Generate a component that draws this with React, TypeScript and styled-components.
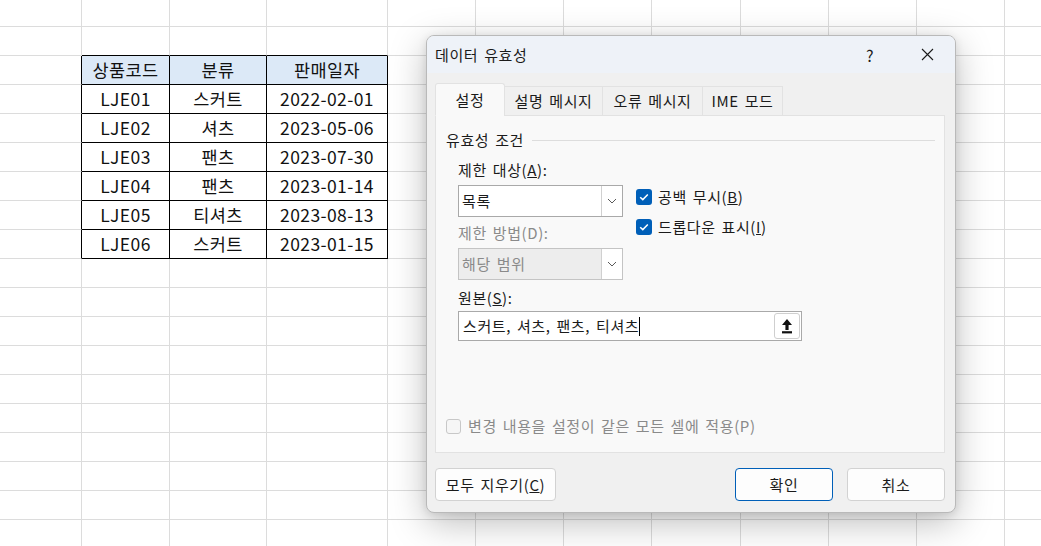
import styled, { createGlobalStyle } from 'styled-components';

const FONT = `"Noto Sans CJK KR", "Noto Sans", sans-serif`;

const GlobalStyle = createGlobalStyle`
  html, body {
    margin: 0;
    padding: 0;
    width: 100%;
    height: 100%;
    overflow: hidden;
    background: #ffffff;
  }
  body {
    font-family: ${FONT};
    color: #1b1b1b;
  }
  * {
    box-sizing: border-box;
  }
`;

// sheet geometry (px) and the little table that sits in B3:D9
const COLUMNS = [82, 88, 97, 121, 88, 88, 88, 89, 88, 88, 88, 88];
const ROW_COUNT = 20;
const HEAD = ['상품코드', '분류', '판매일자'];
const DATA = [
  ['LJE01', '스커트', '2022-02-01'],
  ['LJE02', '셔츠', '2023-05-06'],
  ['LJE03', '팬츠', '2023-07-30'],
  ['LJE04', '팬츠', '2023-01-14'],
  ['LJE05', '티셔츠', '2023-08-13'],
  ['LJE06', '스커트', '2023-01-15'],
];
const TOP = 2;
const LEFT = 1;

const inTable = (r: number, c: number) =>
  r >= TOP && r <= TOP + DATA.length && c >= LEFT && c < LEFT + HEAD.length;

const cellText = (r: number, c: number) => {
  if (!inTable(r, c)) return '';
  if (r === TOP) return HEAD[c - LEFT];
  return DATA[r - TOP - 1][c - LEFT];
};

const App = () => {
  const cells = [];
  for (let r = 0; r < ROW_COUNT; r++) {
    for (let c = 0; c < COLUMNS.length; c++) {
      cells.push(
        <Cell
          key={`${r}-${c}`}
          $right={inTable(r, c) || inTable(r, c + 1)}
          $bottom={inTable(r, c) || inTable(r + 1, c)}
          $head={r === TOP && inTable(r, c)}
        >
          {cellText(r, c)}
        </Cell>
      );
    }
  }

  return (
    <>
      <GlobalStyle />
      <Screen>
        <Sheet>{cells}</Sheet>

        <Dialog>
          <TitleBar>
            <Title>데이터 유효성</Title>
            <TitleButtons>
              <TitleButton>?</TitleButton>
              <TitleButton>
                <svg width="13" height="13" viewBox="0 0 13 13">
                  <path d="M1 1 L12 12 M12 1 L1 12" stroke="#1b1b1b" strokeWidth="1.1" fill="none" />
                </svg>
              </TitleButton>
            </TitleButtons>
          </TitleBar>

          <Body>
            <Tabs>
              <Tab $active $w={70}>설정</Tab>
              <Tab $w={99}>설명 메시지</Tab>
              <Tab $w={101}>오류 메시지</Tab>
              <Tab $w={81}>IME 모드</Tab>
            </Tabs>

            <Panel>
              <GroupHeader>
                <span>유효성 조건</span>
                <GroupLine />
              </GroupHeader>

              <Fields>
                <FieldRow>
                  <LeftCol>
                    <Label>
                      제한 대상(<u>A</u>):
                    </Label>
                    <Combo>
                      <ComboText>목록</ComboText>
                      <ComboArrow>
                        <Chevron />
                      </ComboArrow>
                    </Combo>
                    <Label $disabled $gap={6}>
                      제한 방법(D):
                    </Label>
                    <Combo $disabled>
                      <ComboText>해당 범위</ComboText>
                      <ComboArrow>
                        <Chevron />
                      </ComboArrow>
                    </Combo>
                  </LeftCol>

                  <CheckCol>
                    <CheckRow>
                      <CheckBox>
                        <Tick />
                      </CheckBox>
                      <span>
                        공백 무시(<u>B</u>)
                      </span>
                    </CheckRow>
                    <CheckRow>
                      <CheckBox>
                        <Tick />
                      </CheckBox>
                      <span>
                        드롭다운 표시(<u>I</u>)
                      </span>
                    </CheckRow>
                  </CheckCol>
                </FieldRow>

                <Label $gap={8}>
                  원본(<u>S</u>):
                </Label>
                <SourceInput>
                  <SourceText>
                    스커트, 셔츠, 팬츠, 티셔츠
                    <Caret />
                  </SourceText>
                  <PickButton>
                    <svg width="12" height="16" viewBox="0 0 12 16">
                      <path d="M6 1 L11 7 L7.6 7 L7.6 12 L4.4 12 L4.4 7 L1 7 Z" fill="#111" />
                      <rect x="1" y="13.2" width="10" height="2.2" fill="#111" />
                    </svg>
                  </PickButton>
                </SourceInput>
              </Fields>

              <ApplyRow>
                <EmptyBox />
                <span>변경 내용을 설정이 같은 모든 셀에 적용(P)</span>
              </ApplyRow>
            </Panel>

            <Footer>
              <Button $w={121}>
                모두 지우기(<u>C</u>)
              </Button>
              <ButtonGroup>
                <Button $w={98} $primary>
                  확인
                </Button>
                <Button $w={98}>취소</Button>
              </ButtonGroup>
            </Footer>
          </Body>
        </Dialog>
      </Screen>
    </>
  );
};

const Chevron = () => (
  <svg width="10" height="6" viewBox="0 0 10 6">
    <path d="M1 1 L5 5 L9 1" stroke="#5a5a5a" strokeWidth="1" fill="none" />
  </svg>
);

const Tick = () => (
  <svg width="10" height="8" viewBox="0 0 10 8">
    <path d="M1.2 4.2 L3.8 6.6 L8.8 1.4" stroke="#ffffff" strokeWidth="1.5" fill="none" />
  </svg>
);

const Screen = styled.div`
  position: relative;
  overflow: hidden;

  width: 1041px;
  height: 546px;
`;

const Sheet = styled.div`
  display: grid;

  margin-top: -2px;

  grid-template-columns: ${COLUMNS.map((w) => `${w}px`).join(' ')};
  grid-auto-rows: 29px;
`;

const Cell = styled.div<{ $right: boolean; $bottom: boolean; $head: boolean }>`
  overflow: hidden;

  border-right: 1px solid ${(p) => (p.$right ? '#000000' : '#dcdcdc')};
  border-bottom: 1px solid ${(p) => (p.$bottom ? '#000000' : '#dcdcdc')};

  background: ${(p) => (p.$head ? '#dce9f7' : 'transparent')};
  color: #111111;
  font-size: 17.5px;
  letter-spacing: 0.4px;
  line-height: 28px;
  text-align: center;
  white-space: nowrap;
`;

const Dialog = styled.div`
  display: flex;
  position: absolute;
  top: 35px;
  left: 426px;
  overflow: hidden;
  flex-direction: column;

  width: 530px;
  height: 478px;
  border: 1px solid #b9b9b9;
  border-radius: 8px;

  background: #f0f0f0;
  box-shadow: 0 10px 36px rgba(0, 0, 0, 0.26), 0 2px 8px rgba(0, 0, 0, 0.1);
  font-size: 15px;
  letter-spacing: 0.6px;
  word-spacing: 2px;
  color: #1b1b1b;
`;

const TitleBar = styled.div`
  display: flex;
  align-items: center;
  justify-content: space-between;

  height: 37px;
  padding-left: 8px;

  background: #eef2f8;
`;

const Title = styled.div`
  font-size: 15px;
  line-height: 20px;
`;

const TitleButtons = styled.div`
  display: flex;
  gap: 11px;

  margin-right: 5px;
`;

const TitleButton = styled.div`
  display: flex;
  align-items: center;
  justify-content: center;

  width: 46px;
  height: 30px;

  font-size: 16px;
`;

const Body = styled.div`
  display: flex;
  flex: 1;
  flex-direction: column;

  padding: 10px 10px 0 8px;
`;

const Tabs = styled.div`
  display: flex;
  align-items: flex-end;
  position: relative;
  z-index: 1;

  height: 33px;
  margin-bottom: -1px;
`;

const Tab = styled.div<{ $active?: boolean; $w: number }>`
  display: flex;
  align-items: center;
  justify-content: center;

  width: ${(p) => p.$w}px;
  height: ${(p) => (p.$active ? 33 : 30)}px;
  margin-left: ${(p) => (p.$active ? 0 : -1)}px;
  border: 1px solid #e2e2e2;
  border-bottom-color: ${(p) => (p.$active ? '#f9f9f9' : '#e2e2e2')};
  border-radius: ${(p) => (p.$active ? '3px 3px 0 0' : '0')};

  background: ${(p) => (p.$active ? '#f9f9f9' : '#f0f0f0')};
  line-height: 20px;
  white-space: nowrap;
`;

const Panel = styled.div`
  display: flex;
  flex-direction: column;

  height: 338px;
  padding: 14px 9px 16px 10px;
  border: 1px solid #e2e2e2;

  background: #f9f9f9;
`;

const GroupHeader = styled.div`
  display: flex;
  align-items: center;

  height: 20px;
  line-height: 20px;
`;

const GroupLine = styled.div`
  flex: 1;

  height: 1px;
  margin-left: 8px;

  background: #dddddd;
`;

const Fields = styled.div`
  display: flex;
  flex-direction: column;

  margin-top: 10px;
  padding-left: 12px;
`;

const FieldRow = styled.div`
  display: flex;
  gap: 13px;
`;

const LeftCol = styled.div`
  display: flex;
  flex-direction: column;

  width: 165px;
`;

const Label = styled.div<{ $disabled?: boolean; $gap?: number }>`
  height: 20px;
  margin-top: ${(p) => p.$gap ?? 0}px;

  color: ${(p) => (p.$disabled ? '#8a8a8a' : '#1b1b1b')};
  line-height: 20px;
  white-space: nowrap;
`;

const Combo = styled.div<{ $disabled?: boolean }>`
  display: flex;

  height: 32px;
  margin-top: 5px;
  border: 1px solid ${(p) => (p.$disabled ? '#c4c4c4' : '#a9a9a9')};

  background: ${(p) => (p.$disabled ? '#ededed' : '#ffffff')};
  color: ${(p) => (p.$disabled ? '#8a8a8a' : '#1b1b1b')};
`;

const ComboText = styled.div`
  flex: 1;

  padding-left: 3px;

  line-height: 30px;
`;

const ComboArrow = styled.div`
  display: flex;
  align-items: center;
  justify-content: center;

  width: 21px;
  border-left: 1px solid #d0d0d0;

  background: #ffffff;
`;

const CheckCol = styled.div`
  display: flex;
  flex-direction: column;
  gap: 14px;

  padding-top: 29px;
`;

const CheckRow = styled.div`
  display: flex;
  align-items: center;
  gap: 6px;

  height: 16px;
  line-height: 20px;
  white-space: nowrap;
`;

const CheckBox = styled.div`
  display: flex;
  align-items: center;
  justify-content: center;

  width: 16px;
  height: 16px;
  border-radius: 3px;

  background: #005fb8;
`;

const SourceInput = styled.div`
  display: flex;
  align-items: center;

  width: 344px;
  height: 30px;
  margin-top: 3px;
  padding: 1px;
  border: 1px solid #a9a9a9;

  background: #ffffff;
`;

const SourceText = styled.div`
  display: flex;
  align-items: center;
  flex: 1;

  padding-left: 3px;

  line-height: 20px;
  white-space: pre;
`;

const Caret = styled.span`
  display: inline-block;

  width: 1px;
  height: 19px;

  background: #000000;
`;

const PickButton = styled.div`
  display: flex;
  align-items: center;
  justify-content: center;

  width: 26px;
  height: 26px;
  border: 1px solid #cfcfcf;
  border-radius: 3px;

  background: #ffffff;
`;

const ApplyRow = styled.div`
  display: flex;
  align-items: center;
  gap: 7px;

  height: 20px;
  margin-top: auto;

  color: #8a8a8a;
  line-height: 20px;
  white-space: nowrap;
`;

const EmptyBox = styled.div`
  width: 15px;
  height: 15px;
  border: 1px solid #c8c8c8;
  border-radius: 3px;

  background: #f6f6f6;
`;

const Footer = styled.div`
  display: flex;
  justify-content: space-between;

  margin-top: 15px;
`;

const ButtonGroup = styled.div`
  display: flex;
  gap: 14px;
`;

const Button = styled.div<{ $w: number; $primary?: boolean }>`
  display: flex;
  align-items: center;
  justify-content: center;

  width: ${(p) => p.$w}px;
  height: 33px;
  border: 1px solid ${(p) => (p.$primary ? '#005fb8' : '#d2d2d2')};
  border-radius: 4px;

  background: #fdfdfd;
  line-height: 20px;
  white-space: nowrap;
`;

export default App;
